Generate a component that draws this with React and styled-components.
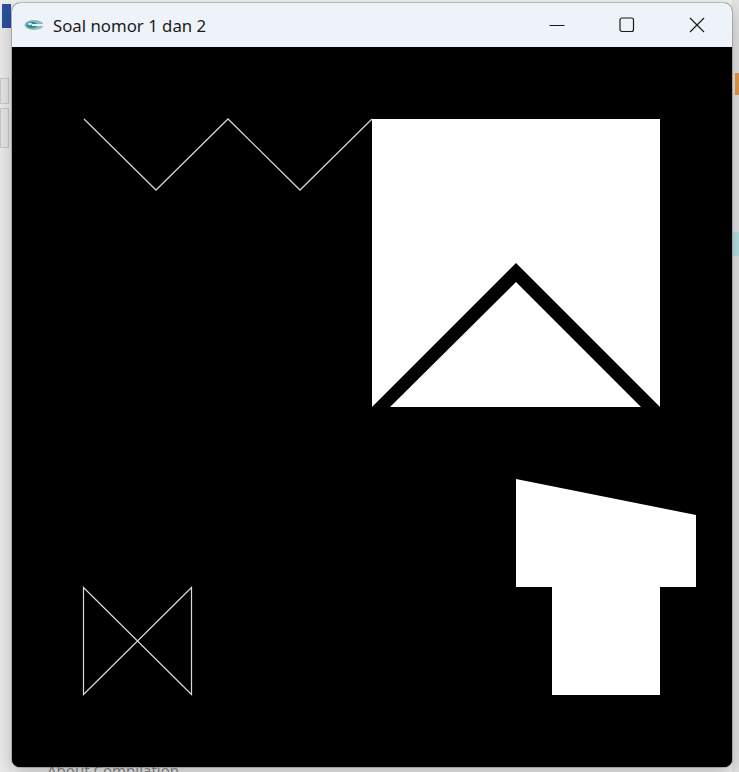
import React from 'react';
import styled, { createGlobalStyle } from 'styled-components';

const GlobalStyle = createGlobalStyle`
  html, body {
    margin: 0;
    padding: 0;
    background: #eeeeee;
    overflow: hidden;
  }
`

const Desktop = styled.div`
  position: relative;
  width: 739px;
  height: 772px;
  overflow: hidden;
  background: #f0f0f0;
  padding: 3px 0 0 12px;
  box-sizing: border-box;
  font-family: "Noto Sans", "Open Sans", sans-serif;
`

// bits of the app that sits behind the window
const BackPiece = styled.div`
  position: absolute;
  left: ${p => p.x}px;
  top: ${p => p.y}px;
  width: ${p => p.w}px;
  height: ${p => p.h}px;
  background: ${p => p.bg || '#e4e4e4'};
  border: ${p => p.border || 'none'};
  box-sizing: border-box;
`

const BackText = styled.div`
  position: absolute;
  left: 47px;
  top: 761px;
  font-size: 15px;
  line-height: 18px;
  color: #8a8a8a;
  white-space: nowrap;
`

const Window = styled.div`
  position: relative;
  width: 720px;
  border-radius: 8px;
  overflow: hidden;
  background: #000;
  box-shadow: 0 0 0 1px rgba(0, 0, 0, 0.18), 0 6px 18px rgba(0, 0, 0, 0.25);
`

const TitleBar = styled.div`
  height: 44px;
  display: flex;
  align-items: center;
  background: #eef2f9;
`

const AppIcon = styled.div`
  width: 21px;
  height: 14px;
  margin-left: 12px;
  display: flex;
  align-items: center;
`

const Title = styled.div`
  margin-left: 8px;
  flex: 1;
  font-size: 16.8px;
  color: #1b1b1b;
`

const Caption = styled.div`
  display: flex;
  height: 100%;
`

const CaptionButton = styled.div`
  width: 70px;
  height: 100%;
  display: flex;
  align-items: center;
  justify-content: center;
  color: #1b1b1b;
`

const Canvas = styled.svg`
  display: block;
  width: 720px;
  height: 720px;
  background: #000;
`

function LogoIcon() {
  return (
    <svg width="21" height="12" viewBox="0 0 21 12">
      <ellipse cx="10" cy="6" rx="9.5" ry="5" fill="#8fb8c0" />
      <ellipse cx="8" cy="6" rx="5.5" ry="3.2" fill="#2e8a96" />
      <path d="M8 6 H20" stroke="#e8f2f4" strokeWidth="2" />
      <ellipse cx="6" cy="5" rx="2" ry="1.3" fill="#d6eef0" />
    </svg>
  )
}

function MinIcon() {
  return (
    <svg width="16" height="16" viewBox="0 0 16 16">
      <path d="M0.5 8.5 H15.5" stroke="currentColor" strokeWidth="1.1" />
    </svg>
  )
}

function MaxIcon() {
  return (
    <svg width="16" height="16" viewBox="0 0 16 16">
      <rect x="1" y="1" width="13.5" height="13.5" rx="2" fill="none" stroke="currentColor" strokeWidth="1.2" />
    </svg>
  )
}

function CloseIcon() {
  return (
    <svg width="16" height="16" viewBox="0 0 16 16">
      <path d="M1 1 L15 15 M15 1 L1 15" stroke="currentColor" strokeWidth="1.2" />
    </svg>
  )
}

const zigzag = [[72, 72], [144, 143], [216, 72], [288, 143], [360, 72]]
const tShape = [[504, 432], [684, 468], [684, 540], [648, 540], [648, 648], [540, 648], [540, 540], [504, 540]]
const roof = [[360, 360], [504, 216], [648, 360], [629, 360], [504, 235], [378, 360]]
const bowtie = [[71.5, 540.5], [179.5, 647.5], [179.5, 540.5], [71.5, 647.5]]

const pts = list => list.map(p => p.join(',')).join(' ')

function Drawing() {
  return (
    <Canvas viewBox="0 0 720 720">
      <polyline points={pts(zigzag)} fill="none" stroke="#cfcfcf" strokeWidth="1.3" />
      <rect x="360" y="72" width="288" height="288" fill="#fff" />
      <polygon points={pts(roof)} fill="#000" />
      <polygon points={pts(tShape)} fill="#fff" />
      <polygon points={pts(bowtie)} fill="none" stroke="#d8d8d8" strokeWidth="1.2" />
    </Canvas>
  )
}

export default function App() {
  return (
    <>
      <GlobalStyle />
      <Desktop>
        <BackPiece x={0} y={0} w={12} h={772} bg="#ebebeb" />
        <BackPiece x={2} y={4} w={9} h={24} bg="#2c4f9e" />
        <BackPiece x={0} y={78} w={9} h={26} bg="#e6e6e6" border="1px solid #c9c9c9" />
        <BackPiece x={0} y={108} w={9} h={40} bg="#e6e6e6" border="1px solid #c9c9c9" />
        <BackPiece x={732} y={0} w={7} h={772} bg="#e3e3e3" />
        <BackPiece x={735} y={73} w={4} h={22} bg="#e39a4c" />
        <BackPiece x={733} y={232} w={6} h={24} bg="#b6e2e4" />
        <BackText>About Compilation</BackText>
        <Window>
          <TitleBar>
            <AppIcon><LogoIcon /></AppIcon>
            <Title>Soal nomor 1 dan 2</Title>
            <Caption>
              <CaptionButton><MinIcon /></CaptionButton>
              <CaptionButton><MaxIcon /></CaptionButton>
              <CaptionButton><CloseIcon /></CaptionButton>
            </Caption>
          </TitleBar>
          <Drawing />
        </Window>
      </Desktop>
    </>
  )
}
